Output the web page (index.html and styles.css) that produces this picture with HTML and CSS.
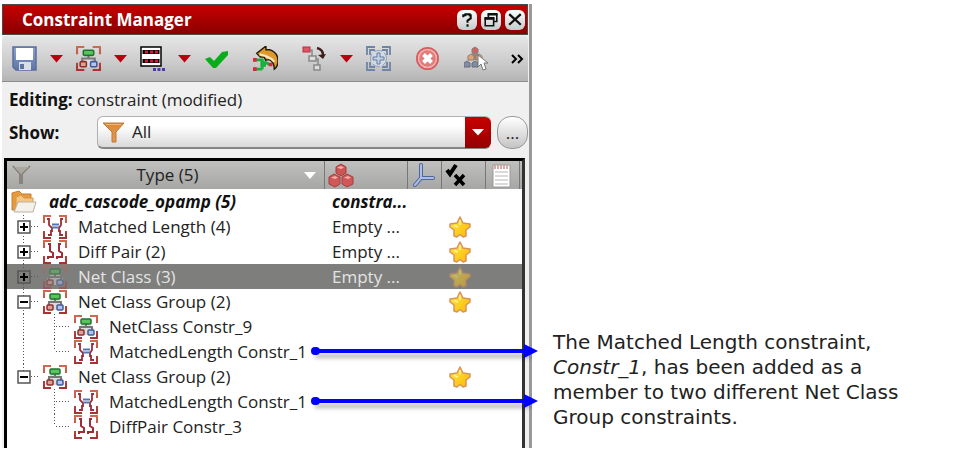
FILE: index.html
```html
<!DOCTYPE html>
<html lang="en">
<head>
<meta charset="utf-8">
<title>Constraint Manager</title>
<link rel="stylesheet" href="styles.css">
</head>
<body>
<svg class="defs" aria-hidden="true">
  <linearGradient id="g-red" x1="0" y1="0" x2="0" y2="1"><stop offset="0" stop-color="#cf6a50"/><stop offset="1" stop-color="#a83232"/></linearGradient>
  <linearGradient id="g-orange" x1="0" y1="0" x2="0" y2="1"><stop offset="0" stop-color="#d88a3c"/><stop offset="1" stop-color="#e8964a"/></linearGradient>
  <linearGradient id="g-gold" x1="0" y1="0" x2="1" y2="1"><stop offset="0" stop-color="#ffe94a"/><stop offset="1" stop-color="#fcb800"/></linearGradient>
  <linearGradient id="g-blue" x1="0" y1="0" x2="0" y2="1"><stop offset="0" stop-color="#8fa2c8"/><stop offset="1" stop-color="#5d75a8"/></linearGradient>
  <symbol id="frame" viewBox="0 0 24 24">
    <path d="M1 8V1H8M16 1H23V8M23 16V23H16M8 23H1V16" fill="none" stroke="url(#g-red)" stroke-width="2"/>
  </symbol>
  <symbol id="netclass" viewBox="0 0 24 24">
    <path d="M4 14 8 9H16L20 14V20H4Z" fill="#dcdcdc"/>
    <use href="#frame"/>
    <path d="M12 8V12M6 16V12H18V16" fill="none" stroke="#777" stroke-width="2"/>
    <rect x="7" y="4" width="10" height="5" rx="1" fill="#5cc35c" stroke="#1d7431" stroke-width="1.5"/>
    <rect x="4" y="15" width="6" height="5" rx="1" fill="#d9a39b" stroke="#8f2f2c" stroke-width="1.5"/>
    <rect x="14" y="15" width="6" height="5" rx="1" fill="#b3c5ea" stroke="#405a98" stroke-width="1.5"/>
  </symbol>
  <symbol id="matched" viewBox="0 0 24 24">
    <use href="#frame"/>
    <path d="M4 4H6V10L9 13V16H8V20H5M20 4H18V10L16 13V16H17V20H20" fill="none" stroke="#a02a35" stroke-width="1.800"/>
    <path d="M9 9.500H16M9 12.500H16" stroke="#5474ad" stroke-width="1.800"/>
  </symbol>
  <symbol id="diffpair" viewBox="0 0 24 24">
    <use href="#frame"/>
    <path d="M5 4H7V11L10 13V17H5V19M18 4H16V11L19 13V17H14V19" fill="none" stroke="#a02a35" stroke-width="2"/>
  </symbol>
  <symbol id="star" viewBox="0 0 24 24">
    <path d="M12 2 15 8 22 9V12L18 15V21L15 22 12 19.500 9 22 6 21V15L2 12V9L9 8Z" fill="url(#g-gold)" stroke="#d9935a" stroke-width="1.500" stroke-linejoin="round"/>
    <path d="M12 5V10M6 10.500 10 12" stroke="#fff59a" stroke-width="1.500"/>
  </symbol>
  <symbol id="plus" viewBox="0 0 14 14">
    <rect x="1" y="1" width="12" height="12" fill="none" stroke="#555" stroke-width="1.500"/>
    <path d="M3 7H11M7 3V11" stroke="#000" stroke-width="2"/>
  </symbol>
  <symbol id="minus" viewBox="0 0 14 14">
    <rect x="1" y="1" width="12" height="12" fill="#fff" stroke="#555" stroke-width="1.500"/>
    <path d="M3 7H11" stroke="#000" stroke-width="2"/>
  </symbol>
  <symbol id="down" viewBox="0 0 13 8">
    <path d="M0 0H13L6.500 7.500Z" fill="#b80010"/>
  </symbol>
</svg>

<main class="page">
  <section class="panel" aria-label="Constraint Manager">
    <header class="titlebar">
      <h1>Constraint Manager</h1>
      <button type="button" aria-label="Help"><svg viewBox="0 0 19 19"><path d="M6 7V5H8V4H12V5H13V8L10 10V12M10 13.500V16" fill="none" stroke="#111" stroke-width="2"/></svg></button>
      <button type="button" aria-label="Undock"><svg viewBox="0 0 19 19"><path d="M7 7V4H15V11H12M4 8H12V15H4Z" fill="none" stroke="#111" stroke-width="1.500"/><path d="M6.300 4H15.700M3.300 8H12.700" stroke="#111" stroke-width="2.500"/></svg></button>
      <button type="button" aria-label="Close"><svg viewBox="0 0 19 19"><path d="M4 4 15 14M15 4 4 14" stroke="#111" stroke-width="2.200"/></svg></button>
    </header>

    <div class="toolbar" role="toolbar">
      <button type="button" aria-label="Save"><svg viewBox="0 0 25 25"><path d="M1 1H24V24H4L1 21Z" fill="url(#g-blue)" stroke="#5a6f9f" stroke-width="1.500"/><rect x="4" y="2" width="17" height="12" fill="#fff"/><rect x="7" y="16" width="12" height="8" fill="#d9dee6"/><rect x="8" y="18" width="4" height="5" fill="#5c74a5"/></svg></button>
      <button type="button" class="drop" aria-label="Save options"><svg viewBox="0 0 13 8"><use href="#down"/></svg></button>
      <button type="button" aria-label="Net class"><svg viewBox="0 0 24 24"><use href="#netclass"/></svg></button>
      <button type="button" class="drop" aria-label="Net class options"><svg viewBox="0 0 13 8"><use href="#down"/></svg></button>
      <button type="button" aria-label="Template"><svg viewBox="0 0 25 25"><rect x="1" y="1" width="20" height="19" fill="#fff" stroke="#000" stroke-width="1.500"/><path d="M2.500 6H19.500M2.500 15H19.500" stroke="#000" stroke-width="4"/><path d="M5 6H8M10 6H13M15 6H18M5 15H8M10 15H13M15 15H18" stroke="#dc1238" stroke-width="3"/><path d="M13 23.500H16M17.500 23.500H20.500M22 23.500H25" stroke="#4a38b0" stroke-width="3"/></svg></button>
      <button type="button" class="drop" aria-label="Template options"><svg viewBox="0 0 13 8"><use href="#down"/></svg></button>
      <button type="button" aria-label="Check"><svg viewBox="0 0 25 25"><path d="M1 13 6 11 10 15 18 6 24 5V9L12 22H9Z" fill="#09ad1b"/></svg></button>
      <button type="button" class="apart" aria-label="Revert"><svg viewBox="0 0 27 27"><path d="M2 15H10V25M2 25H10M8 18H14L18 20M8 21H14" fill="none" stroke="#16b03c" stroke-width="3"/><path d="M0 13H4V17H0ZM0 23H4V27H0ZM17 18H21V22H17Z" fill="#d8283c"/><path d="M4 8 14 0V4H18C24 6 27 11 27 16 27 20 26 23 23 25 23 20 22 17 18 15H14V16L12 12H8Z" fill="#dd9a28" stroke="#251a08" stroke-width="1.500"/><path d="M7 9 13 10.500 16 12 20 14 23 17" fill="none" stroke="#f8e6bd" stroke-width="2.500"/></svg></button>
      <button type="button" class="apart" aria-label="Propagate"><svg viewBox="0 0 25 25"><rect x="1" y="1" width="7" height="5" fill="#dc5664" stroke="#b92f40"/><g fill="#ddd" stroke="#898989" stroke-width="1.500"><path d="M8 4H10V10" fill="none"/><rect x="7" y="10" width="7" height="5"/><rect x="12" y="19" width="6" height="5"/><path d="M14 13H16V19" fill="none"/></g><path d="M15 2C19 3 21 5 21 9" fill="none" stroke="#40201f" stroke-width="2.500"/><path d="M16 9 24 8 21 13Z" fill="#40201f"/></svg></button>
      <button type="button" class="drop" aria-label="Propagate options"><svg viewBox="0 0 13 8"><use href="#down"/></svg></button>
      <button type="button" aria-label="Zoom to fit"><svg viewBox="0 0 25 25"><path d="M1 9V1H9M16 1H24V9M24 16V24H16M9 24H1V16M4 9V4H9M16 4H21V9M21 16V21H16M9 21H4V16" fill="none" stroke="#6f85a6" stroke-width="1.800"/><circle cx="12.500" cy="12.500" r="8" fill="#d2dae4" stroke="#8fa0b8" stroke-dasharray="8 3"/><path d="M11 7H14V11H18V14H14V18H11V14H7V11H11Z" fill="#c3d0e2" stroke="#667d9f"/></svg></button>
      <button type="button" class="apart" aria-label="Delete"><svg viewBox="0 0 25 25"><circle cx="12.500" cy="12.500" r="10.500" fill="#e37b7b" stroke="#d85b5b" stroke-width="2"/><circle cx="12.500" cy="12.500" r="9" fill="none" stroke="#efb3b3" stroke-width="1.500"/><path d="M8.500 8.500 16.500 16.500M16.500 8.500 8.500 16.500" stroke="#fff" stroke-width="4"/></svg></button>
      <button type="button" class="apart" aria-label="Select"><svg viewBox="0 0 25 25"><path d="M11 5V14M11 6 5 13M11 6 17 13" stroke="#888" stroke-width="2"/><path d="M8 3 11 1 14 3V7H8Z" fill="#cf6262" stroke="#8d7c7c"/><path d="M4 10 7 8 10 10V14H4ZM12 10 15 8 18 10V14H12Z" fill="#e5a270" stroke="#8c8078"/><path d="M0 17 3 15 6 17V21H0ZM8 17 11 15 14 17V21H8Z" fill="#7e8daa" stroke="#6d6d75"/><path d="M14 9V21L17 18 19 24 22 23 20 17H24Z" fill="#fff" stroke="#777"/></svg></button>
      <button type="button" class="more" aria-label="More tools"><svg viewBox="0 0 13 10"><path d="M1 1 5 5 1 9M7 1 11 5 7 9" fill="none" stroke="#000" stroke-width="2"/></svg></button>
    </div>

    <div class="filters">
      <p><strong>Editing:</strong> constraint (modified)</p>
      <div class="show">
        <label for="show">Show:</label>
        <div class="combo">
          <svg class="funnel" viewBox="0 0 23 21" aria-hidden="true"><path d="M1 1H22L14 10V20H10V10Z" fill="url(#g-orange)" stroke="#b97a3c"/><path d="M4 2.500H19" stroke="#f0b878"/></svg>
          <select id="show"><option>All</option></select>
          <span class="knob"><svg viewBox="0 0 12 7" aria-hidden="true"><path d="M0 0H12L6 6.500Z" fill="#fff"/></svg></span>
        </div>
        <button type="button" class="round" aria-label="Browse">...</button>
      </div>
    </div>

    <table class="tree">
      <colgroup><col><col class="c-obj"><col class="c-axis"><col class="c-state"><col class="c-note"><col class="c-end"></colgroup>
      <thead>
        <tr>
          <th scope="col"><div class="type"><svg class="f" viewBox="0 0 19 20" aria-hidden="true"><path d="M1 1 8 9V19M18 1 10 9V19" fill="none" stroke="#80776e" stroke-width="1.500"/><path d="M2 2H17L9 9Z" fill="#aaa79f"/></svg><span>Type (5)</span><svg class="sort" viewBox="0 0 12 7" aria-hidden="true"><path d="M0 0H12L6 7Z" fill="#fff"/></svg></div></th>
          <th scope="col" aria-label="Objects"><svg class="hi" viewBox="0 0 26 25"><g stroke="#a83c3c" stroke-linejoin="round"><path d="M8 4 13 1 18 4V10L13 13 8 10Z" fill="#cc5555"/><path d="M1 14 6 11 12 14V21L7 24 1 21ZM14 14 19 11 25 14V21L19 24 14 21Z" fill="#d05858"/></g><path d="M9 4.500 13 3 16 4.500 13 6ZM3 14.500 7 13 10 14.500 7 16ZM16 14.500 20 13 23 14.500 20 16Z" fill="#f3b0aa"/></svg></th>
          <th scope="col" aria-label="Axis"><svg class="hi" viewBox="0 0 26 25"><path d="M10 2V15L4 22M10 15H22" fill="none" stroke="#50659c" stroke-width="4" stroke-linecap="round"/><path d="M10 2V15L4 22M10 15H22" fill="none" stroke="#adbfe4" stroke-width="2" stroke-linecap="round"/></svg></th>
          <th scope="col" aria-label="Status"><svg class="hi" viewBox="0 0 26 25"><path d="M2 7 5 11 11 2" fill="none" stroke="#000" stroke-width="4"/><path d="M10 12 19 22M19 12 10 22" stroke="#000" stroke-width="3.500"/></svg></th>
          <th scope="col" aria-label="Notes"><svg class="hi" viewBox="0 0 26 25"><path d="M4 2H21V24H4Z" fill="#fff" stroke="#999"/><path d="M5 4H20" stroke="#d9a6a6" stroke-width="4" stroke-dasharray="2 1"/><path d="M6 9H19M6 13H19M6 17H19M6 21H19" stroke="#b5b5b5"/></svg></th>
          <th></th>
        </tr>
      </thead>
      <tbody>
        <tr class="root">
          <td><div class="name"><svg class="folder" viewBox="0 0 26 24" aria-hidden="true"><path d="M1 20V3L8 1 11 4H20V8L22 20Z" fill="#e79a3f" stroke="#c97d2c"/><path d="M5 19V7L10 5 13 8H22V19Z" fill="#f5c583" stroke="#d99545"/><path d="M7 12H25L22 22H3Z" fill="#f4f1ea" stroke="#b9b0a2"/></svg>adc_cascode_opamp (5)</div></td>
          <td colspan="5">constra...</td>
        </tr>
        <tr>
          <td><div class="name"><svg class="g1" viewBox="0 0 36 25"><path d="M16.500 1V25M24 12.500H31" class="dots"/><rect x="10" y="6" width="14" height="14" fill="#fff"/><use href="#plus" x="10" y="6" width="14" height="14"/></svg><svg class="ico" viewBox="0 0 24 24"><use href="#matched"/></svg><span>Matched Length (4)</span></div></td>
          <td>Empty ...</td><td></td><td><svg class="star" viewBox="0 0 24 24"><use href="#star"/></svg></td><td></td><td></td>
        </tr>
        <tr>
          <td><div class="name"><svg class="g1" viewBox="0 0 36 25"><path d="M16.500 0V25M24 12.500H31" class="dots"/><rect x="10" y="6" width="14" height="14" fill="#fff"/><use href="#plus" x="10" y="6" width="14" height="14"/></svg><svg class="ico" viewBox="0 0 24 24"><use href="#diffpair"/></svg><span>Diff Pair (2)</span></div></td>
          <td>Empty ...</td><td></td><td><svg class="star" viewBox="0 0 24 24"><use href="#star"/></svg></td><td></td><td></td>
        </tr>
        <tr class="selected">
          <td><div class="name"><svg class="g1" viewBox="0 0 36 25"><path d="M16.500 0V6M16.500 20V25M24 12.500H31" class="dots"/><use href="#plus" x="10" y="6" width="14" height="14"/></svg><svg class="ico" viewBox="0 0 24 24"><use href="#netclass"/></svg><span>Net Class (3)</span></div></td>
          <td>Empty ...</td><td></td><td><svg class="star" viewBox="0 0 24 24"><use href="#star"/></svg></td><td></td><td></td>
        </tr>
        <tr>
          <td><div class="name"><svg class="g1" viewBox="0 0 36 25"><path d="M16.500 0V25M24 12.500H31" class="dots"/><use href="#minus" x="10" y="6" width="14" height="14"/></svg><svg class="ico" viewBox="0 0 24 24"><use href="#netclass"/></svg><span>Net Class Group (2)</span></div></td>
          <td></td><td></td><td><svg class="star" viewBox="0 0 24 24"><use href="#star"/></svg></td><td></td><td></td>
        </tr>
        <tr>
          <td><div class="name"><svg class="g2" viewBox="0 0 67 25"><path d="M16.500 0V25M47.500 0V25M49 12.500H63" class="dots"/></svg><svg class="ico" viewBox="0 0 24 24"><use href="#netclass"/></svg><span>NetClass Constr_9</span></div></td>
          <td></td><td></td><td></td><td></td><td></td>
        </tr>
        <tr class="linked">
          <td><div class="name"><svg class="g2" viewBox="0 0 67 25"><path d="M16.500 0V25M47.500 0V12M49 12.500H63" class="dots"/></svg><svg class="ico" viewBox="0 0 24 24"><use href="#matched"/></svg><span>MatchedLength Constr_1</span></div><i class="pointer"></i></td>
          <td></td><td></td><td></td><td></td><td></td>
        </tr>
        <tr>
          <td><div class="name"><svg class="g1" viewBox="0 0 36 25"><path d="M16.500 0V12M24 12.500H31" class="dots"/><use href="#minus" x="10" y="6" width="14" height="14"/></svg><svg class="ico" viewBox="0 0 24 24"><use href="#netclass"/></svg><span>Net Class Group (2)</span></div></td>
          <td></td><td></td><td><svg class="star" viewBox="0 0 24 24"><use href="#star"/></svg></td><td></td><td></td>
        </tr>
        <tr class="linked">
          <td><div class="name"><svg class="g2" viewBox="0 0 67 25"><path d="M47.500 0V25M49 12.500H63" class="dots"/></svg><svg class="ico" viewBox="0 0 24 24"><use href="#matched"/></svg><span>MatchedLength Constr_1</span></div><i class="pointer"></i></td>
          <td></td><td></td><td></td><td></td><td></td>
        </tr>
        <tr class="last">
          <td><div class="name"><svg class="g2" viewBox="0 0 67 25"><path d="M47.500 0V12M49 12.500H63" class="dots"/></svg><svg class="ico" viewBox="0 0 24 24"><use href="#diffpair"/></svg><span>DiffPair Constr_3</span></div></td>
          <td></td><td></td><td></td><td></td><td></td>
        </tr>
      </tbody>
    </table>
  </section>

  <aside class="note">
    <p>The Matched Length constraint, <em>Constr_1</em>, has been added as a member to two different Net Class Group constraints.</p>
  </aside>
</main>
</body>
</html>
```
FILE: styles.css
```css
* { box-sizing: border-box; }

body {
  margin: 0;
  background: #fff;
  color: #222;
  font: 17px/24px "Open Sans", "Noto Sans", sans-serif;
}

svg { display: block; }
button { padding: 0; border: 0; background: none; color: inherit; font: inherit; }
h1, p { margin: 0; }
.defs { position: absolute; width: 0; height: 0; }

.page {
  display: grid;
  grid-template-columns: minmax(0, 530fr) minmax(0, 431fr);
  align-items: start;
  padding: 4px 0 8px 2px;
}

.panel {
  padding-right: 1px;
  background: #f0f0f0;
  border-right: 3px solid #999;
}

.titlebar {
  display: flex;
  align-items: center;
  gap: 4px;
  height: 31px;
  padding: 0 2px 0 19px;
  border: 1px solid #4a4a4a;
  background: linear-gradient(#c60000, #8a0000);
  color: #fff;
}
.titlebar h1 { flex: 1; font-size: 17px; line-height: 24px; }
.titlebar button {
  width: 20px;
  height: 20px;
  border-radius: 6px;
  background: linear-gradient(#fff, #c9c9c9);
}
.titlebar svg { width: 20px; height: 20px; }

.toolbar {
  display: flex;
  align-items: center;
  gap: 13px;
  height: 46px;
  margin-top: 1px;
  padding: 0 4px 0 10px;
  border-bottom: 1px solid #8c8c88;
  border-radius: 4px 4px 0 0;
  background: linear-gradient(#e6e6e6, #cbcbcb 60%, #b4b4b4);
}
.toolbar button { flex: none; width: 25px; }
.toolbar button svg { width: 100%; height: auto; }
.toolbar .drop, .toolbar .more { width: 13px; }
.toolbar .apart { margin-left: 11px; }
.toolbar .more { margin-left: auto; }

.filters { padding: 6px 0 9px 7px; color: #222; }
.filters strong, .filters label { color: #111; font-weight: 700; }
.show { display: flex; align-items: center; gap: 6px; margin-top: 4px; }
.show label { width: 82px; }
.combo { position: relative; flex: 1; }
.combo select {
  display: block;
  width: 100%;
  height: 33px;
  padding: 0 34px;
  border: 1px solid #b0b0b0;
  border-bottom: 2px solid #858585;
  border-radius: 6px;
  background: linear-gradient(#fff 30%, #d9d9d9);
  color: #222;
  font: inherit;
  appearance: none;
}
.funnel { position: absolute; left: 5px; top: 6px; width: 23px; height: 21px; }
.knob {
  position: absolute;
  top: 1px;
  right: 0;
  bottom: 1px;
  display: grid;
  place-items: center;
  width: 26px;
  border-radius: 0 6px 6px 0;
  background: linear-gradient(#c80000, #940000);
  pointer-events: none;
}
.knob svg { width: 12px; height: 7px; }
.round {
  width: 31px;
  height: 33px;
  border: 1px solid #999;
  border-radius: 14px;
  background: linear-gradient(#fff, #c4c4c4);
}

.tree {
  width: calc(100% - 5px);
  margin-left: 2px;
  border: solid #000;
  border-width: 3px 3px 0 3px;
  border-right-color: #333;
  border-spacing: 0;
  table-layout: fixed;
  background: #fff;
}
.c-obj { width: 83px; }
.c-axis { width: 34px; }
.c-state { width: 44px; }
.c-note { width: 34px; }
.c-end { width: 2px; }
.tree th {
  height: 28px;
  padding: 0;
  border-right: 1px solid #777;
  background: linear-gradient(#c0c0bf, #a6a6a5);
  font-weight: 400;
}
.tree th:last-child { border-right: 0; }
.type { display: flex; align-items: center; padding: 0 8px 0 5px; }
.type .f { width: 19px; height: 20px; }
.type span { flex: 1; }
.type .sort { width: 12px; height: 7px; }
.hi { width: 26px; height: 25px; margin-left: 3px; }

.tree td { height: 25px; padding: 0; white-space: nowrap; }
.tree td + td { padding-left: 7px; }
.tree td:nth-child(4) { padding-left: 6px; }
.name { display: flex; align-items: center; height: 25px; }
.g1 { flex: none; width: 36px; height: 25px; }
.g2 { flex: none; width: 67px; height: 25px; }
.dots { fill: none; stroke: #555; stroke-dasharray: 1 2; }
.ico { flex: none; width: 24px; height: 24px; margin-right: 11px; }
.star { width: 24px; height: 24px; }
.folder { width: 26px; height: 24px; margin: 0 12px 0 4px; }
.root { color: #111; font-style: italic; font-weight: 700; }
.selected { background: #7e7e7c; color: #e4e4e4; }
.selected .ico { opacity: .45; }
.selected .star { opacity: .5; }
.tree .last td { padding-bottom: 9px; }

.linked { position: relative; }
.pointer {
  position: absolute;
  top: 10px;
  left: 308px;
  right: -9px;
  height: 4px;
  background: #00f;
  box-shadow: 0 5px 4px rgba(0, 0, 0, .3);
}
.pointer::before {
  content: "";
  position: absolute;
  top: -2px;
  left: -4px;
  width: 9px;
  height: 8px;
  border-radius: 4px;
  background: #00f;
}
.pointer::after {
  content: "";
  position: absolute;
  top: -5px;
  right: -7px;
  border: solid transparent;
  border-width: 7px 0 7px 14px;
  border-left-color: #00f;
}

.note {
  align-self: end;
  padding: 0 50px 18px 21px;
  color: #222;
  font: 20px/25px "DejaVu Sans", Verdana, sans-serif;
}
```
